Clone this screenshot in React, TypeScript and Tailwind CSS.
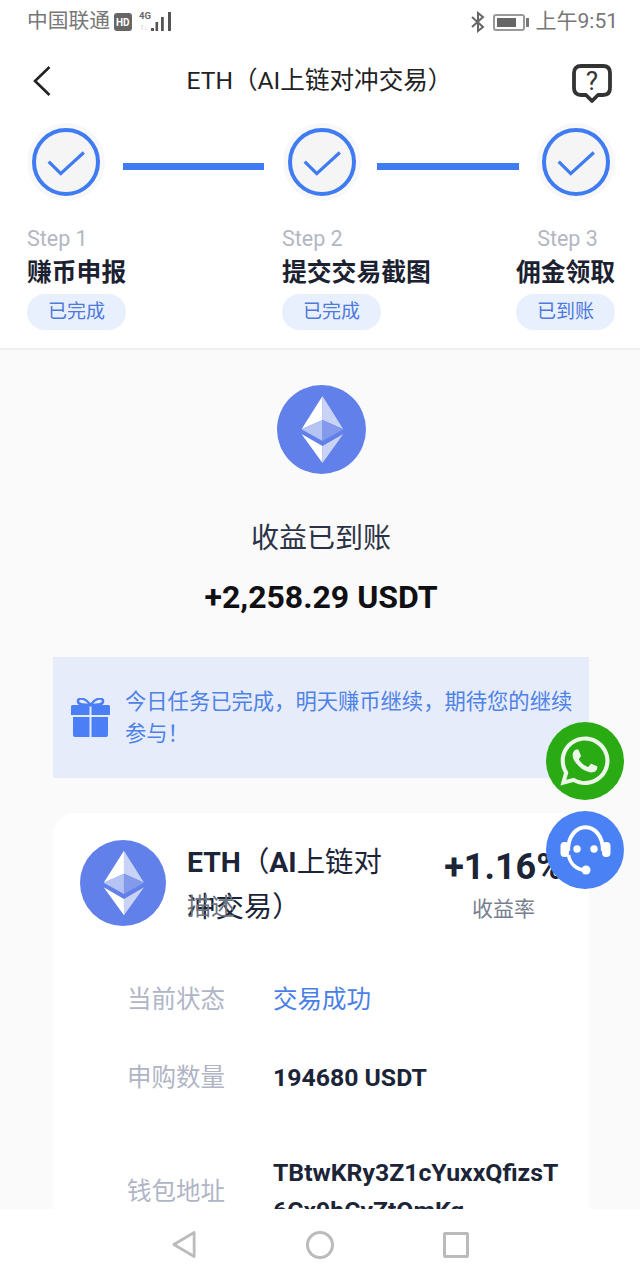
import { FaWhatsapp } from "react-icons/fa";

const cjk = "font-['Roboto','Noto_Sans_CJK_SC',sans-serif]";

function EthIcon({ className }: { className: string }) {
  return (
    <svg viewBox="0 0 89 89" className={className}>
      <circle cx="44.5" cy="44.5" r="44.5" fill="#6180e9" />
      <polygon points="45.5,11 24.5,44.3 45.5,35" fill="#ffffff" />
      <polygon points="45.5,11 66.3,44.3 45.5,35" fill="#c9d3f6" />
      <polygon points="24.5,44.3 45.5,35 45.5,56" fill="#b6c4f3" />
      <polygon points="66.3,44.3 45.5,35 45.5,56" fill="#8399ec" />
      <polygon points="24.5,49 45.5,61 45.5,78" fill="#ffffff" />
      <polygon points="66.3,49 45.5,61 45.5,78" fill="#c9d3f6" />
    </svg>
  );
}

function StepCircle() {
  return (
    <div className="w-[78px] h-[78px] shrink-0 rounded-full bg-[#f8f8fa] flex items-center justify-center">
      <div className="w-[68px] h-[68px] rounded-full border-[4px] border-[#3f7bf1] bg-[#f5f5f5] flex items-center justify-center">
        <svg viewBox="0 0 40 26" className="mt-[3px] w-[39px] h-[25px]" fill="none" stroke="#3f7bf1" strokeWidth="3.4">
          <path d="M1.5 11 L14 23.5 L38 1.5" />
        </svg>
      </div>
    </div>
  );
}

function StepLabel({ step, title, status, className, stepClass }: { step: string; title: string; status: string; className: string; stepClass?: string }) {
  return (
    <div className={`flex flex-col ${className}`}>
      <div className={`text-[21.5px] leading-[28px] text-[#b2b7c2] ${stepClass ?? ""}`}>{step}</div>
      <div className="mt-[2px] text-[24.8px] leading-[36px] font-bold text-[#1b2130] whitespace-nowrap">{title}</div>
      <div className="mt-[3px] w-[99px] h-[36px] rounded-full bg-[#e8f0fe] text-[#4f79dd] text-[19px] flex items-center justify-center">
        {status}
      </div>
    </div>
  );
}

function InfoRow({ label, className, children }: { label: string; className: string; children: React.ReactNode }) {
  return (
    <div className={`flex items-center pl-[74px] ${className}`}>
      <div className="w-[146px] shrink-0 text-[24.5px] text-[#b0b5c6]">{label}</div>
      {children}
    </div>
  );
}

export default function App() {
  return (
    <div className={`relative w-[640px] h-[1280px] overflow-hidden bg-[#fafafa] flex flex-col ${cjk}`}>
      {/* status bar + header + steps */}
      <div className="bg-white border-b-2 border-[#f0f0f0] h-[350px] shrink-0">
        <div className="h-[44px] pl-[27px] pr-[22px] flex items-center justify-between text-[#777777]">
          <div className="flex items-center">
            <span className="text-[20.75px]">中国联通</span>
            <svg viewBox="0 0 58 22" className="ml-[4px] w-[58px] h-[22px]">
              <rect x="0" y="2" width="18" height="18" rx="3" fill="#666666" />
              <text x="2" y="15" fontSize="10" fontWeight="700" fill="#ffffff" fontFamily="Roboto">HD</text>
              <text x="25" y="8" fontSize="9.5" fontWeight="700" fill="#666666" fontFamily="Roboto">4G</text>
              <text x="26" y="19" fontSize="7" fill="#cccccc" fontFamily="Roboto">1↓</text>
              <rect x="37" y="17" width="3" height="3" fill="#555555" />
              <rect x="41.5" y="11" width="2.6" height="9" fill="#555555" />
              <rect x="47" y="6" width="2.8" height="14" fill="#555555" />
              <rect x="54" y="1" width="3" height="19" fill="#555555" />
            </svg>
          </div>
          <div className="flex items-center">
            <svg viewBox="0 0 16 22" className="w-[16px] h-[22px]" fill="none" stroke="#666666" strokeWidth="2">
              <path d="M2 6 L13 16 L8 20 V2 L13 6 L2 16" />
            </svg>
            <div className="ml-[7px] w-[32px] h-[17px] border-2 border-[#999999] rounded-[3px] p-[2px]">
              <div className="w-[19px] h-full bg-[#666666]" />
            </div>
            <div className="ml-[1px] w-[3px] h-[9px] bg-[#777777]" />
            <span className="ml-[7px] text-[21px]">上午9:51</span>
          </div>
        </div>

        <div className="h-[74px] pl-[33px] pr-[28px] flex items-center justify-between">
          <svg viewBox="0 0 18 30" className="w-[18px] h-[30px]" fill="none" stroke="#222222" strokeWidth="2.6">
            <path d="M16.5 1 L2 15 L16.5 29" />
          </svg>
          <div className="ml-[16px] text-[24.6px] text-[#222222]">ETH（AI上链对冲交易）</div>
          <svg viewBox="0 0 40 40" className="mt-[6px] w-[40px] h-[40px]">
            <path
              d="M9 2 H31 Q38 2 38 9 V24 Q38 31 31 31 H26 L20 37 L14 31 H9 Q2 31 2 24 V9 Q2 2 9 2 Z"
              fill="none"
              stroke="#333333"
              strokeWidth="3.8"
              strokeLinejoin="round"
            />
            <text x="20" y="26" textAnchor="middle" fontSize="26" fill="#333333" fontFamily="Roboto">?</text>
          </svg>
        </div>

        <div className="pl-[27px] pr-[25px] pt-[5px] flex items-center">
          <StepCircle />
          <div className="ml-[18px] mr-[19px] mt-[9px] h-[7px] w-[141px] bg-[#3f7bf1]" />
          <StepCircle />
          <div className="ml-[16px] mr-[18px] mt-[9px] h-[7px] w-[142px] bg-[#3f7bf1]" />
          <StepCircle />
        </div>

        <div className="pl-[27px] mt-[24px] flex">
          <StepLabel className="w-[255px] items-start" step="Step 1" title="赚币申报" status="已完成" />
          <StepLabel className="w-[234px] items-start" step="Step 2" title="提交交易截图" status="已完成" />
          <StepLabel className="w-[99px] items-center" stepClass="ml-[4px]" step="Step 3" title="佣金领取" status="已到账" />
        </div>
      </div>

      {/* result */}
      <div className="flex-1 overflow-hidden">
        <div className="pl-[2px] pt-[35px] flex flex-col items-center">
          <EthIcon className="w-[89px] h-[89px]" />
          <div className="mt-[45px] text-[28px] leading-[40px] text-[#2b3245]">收益已到账</div>
          <div className="mt-[18px] text-[32px] leading-[40px] font-bold text-[#0f0f14]">+2,258.29 USDT</div>
        </div>

        <div className="ml-[53px] w-[536px] mt-[40px] h-[121px] bg-[#e6ecfa] pl-[18px] pr-[14px] flex items-center gap-[14px]">
          <svg viewBox="0 0 40 40" className="w-[40px] h-[40px] shrink-0">
            <path d="M19.5 7 C14 -1 6 -1 7 4 C8 7 14 7 19.5 7 C25 7 31 7 32 4 C33 -1 25 -1 19.5 7 Z" fill="none" stroke="#4a7ff5" strokeWidth="2.4" />
            <path d="M1.5 7 H18.5 V17 H0 V8.5 Q0 7 1.5 7 Z M20.5 7 H37.5 Q39 7 39 8.5 V17 H20.5 Z M2 19 H18.5 V39 H4 Q2 39 2 37 Z M20.5 19 H37 V37 Q37 39 35 39 H20.5 Z" fill="#4a7ff5" />
          </svg>
          <div className="text-[21.3px] leading-[32px] text-[#4f82e6]">今日任务已完成，明天赚币继续，期待您的继续参与！</div>
        </div>

        <div className="ml-[53px] w-[536px] mt-[35px] h-[480px] rounded-t-[22px] bg-white">
          <div className="pl-[27px] pt-[27px] flex">
            <EthIcon className="w-[86px] h-[86px] shrink-0" />
            <div className="relative ml-[21px] w-[200px] text-[28.4px] leading-[45px] text-[#1c2438]">
              <div>
                <span className="font-bold">ETH</span>（<span className="font-bold">AI</span>上链对冲交易）
              </div>
              <span className="absolute left-0 top-[45px] text-[#6b7280] text-[24px]">描述</span>
            </div>
            <div className="ml-[58px] w-[117px] shrink-0 flex flex-col items-center">
              <div className="text-[36px] leading-[54px] font-bold text-[#1c2438] whitespace-nowrap">+1.16%</div>
              <div className="text-[21px] leading-[28px] mt-[1px] text-[#788090]">收益率</div>
            </div>
          </div>

          <InfoRow label="当前状态" className="mt-[50px] h-[40px]">
            <span className="text-[24.5px] text-[#4a7fe8]">交易成功</span>
          </InfoRow>
          <InfoRow label="申购数量" className="mt-[38px] h-[40px]">
            <span className="text-[24.8px] font-bold text-[#1c2438]">194680 USDT</span>
          </InfoRow>
          <InfoRow label="钱包地址" className="mt-[56px] h-[76px]">
            <span className="w-[290px] text-[24.8px] leading-[38px] font-bold text-[#1c2438] break-all">
              TBtwKRy3Z1cYuxxQfizsT6Cx9hCyZtQmKq
            </span>
          </InfoRow>
        </div>
      </div>

      {/* android nav bar */}
      <div className="relative z-10 h-[71px] shrink-0 bg-white flex items-center justify-center">
        <svg viewBox="0 0 26 30" className="w-[24px] h-[29px]" fill="none" stroke="#bbbbbb" strokeWidth="3" strokeLinejoin="round">
          <path d="M24 2 V28 L2 15 Z" />
        </svg>
        <div className="ml-[110px] w-[28px] h-[28px] rounded-full border-[3px] border-[#bbbbbb]" />
        <div className="ml-[109px] w-[26px] h-[26px] rounded-[2px] border-[3px] border-[#bbbbbb]" />
      </div>

      {/* floating buttons */}
      <div className="absolute left-[546px] top-[722px] w-[78px] h-[78px] rounded-full bg-[#2aab14] flex items-center justify-center">
        <FaWhatsapp className="w-[56px] h-[56px] text-[#ecf7ea]" />
      </div>
      <div className="absolute left-[546px] top-[811px] w-[78px] h-[78px] rounded-full bg-[#4a82f5] flex items-center justify-center">
        <svg viewBox="0 0 52 52" className="w-[52px] h-[52px]">
          <path d="M9 27 C9 -4.7 44 -4.7 44 27" fill="none" stroke="#ffffff" strokeWidth="4" />
          <circle cx="18" cy="25" r="3.7" fill="#ffffff" />
          <circle cx="35" cy="25" r="3.7" fill="#ffffff" />
          <rect x="1.5" y="18" width="8.5" height="15" rx="4" fill="#ffffff" />
          <rect x="43" y="18" width="8.5" height="15" rx="4" fill="#ffffff" />
          <path d="M9.5 31 C11 40 18 46 26 46" fill="none" stroke="#ffffff" strokeWidth="3.5" />
          <circle cx="27" cy="46" r="4.5" fill="#ffffff" />
        </svg>
      </div>
    </div>
  );
}
